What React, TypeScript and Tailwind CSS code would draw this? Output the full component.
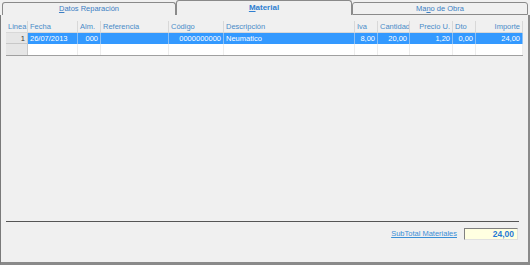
import React from "react";

const cols = [
  { h: "Linea", w: 22, ha: "left", v: "1", va: "right" },
  { h: "Fecha", w: 50, ha: "left", v: "26/07/2013", va: "left" },
  { h: "Alm.", w: 23, ha: "left", v: "000", va: "right" },
  { h: "Referencia", w: 68, ha: "left", v: "", va: "left" },
  { h: "Código", w: 55, ha: "left", v: "0000000000", va: "right" },
  { h: "Descripción", w: 131, ha: "left", v: "Neumatico", va: "left" },
  { h: "Iva", w: 23, ha: "left", v: "8,00", va: "right" },
  { h: "Cantidad", w: 32, ha: "left", v: "20,00", va: "right" },
  { h: "Precio U.", w: 43, ha: "right", v: "1,20", va: "right" },
  { h: "Dto", w: 23, ha: "left", v: "0,00", va: "right" },
  { h: "Importe", w: 47, ha: "right", v: "24,00", va: "right" },
];

export default function App() {
  return (
    <div
      className="w-[530px] h-[265px] bg-[#f0f0f0] flex flex-col text-[7.5px] leading-none overflow-hidden"
      style={{ fontFamily: '"Liberation Sans", Arial, sans-serif' }}
    >
      {/* tabs */}
      <div className="flex h-[15px] pl-[2px] pr-[2px] items-end shrink-0">
        <div className="w-[174px] h-[13px] border border-b-0 border-[#8a8a8a] rounded-t-[3px] bg-[#f0f0f0] flex items-center justify-center text-[#3c7fc4] border-b border-b-[#8a8a8a]">
          <span>
            <span className="underline">D</span>atos Reparación
          </span>
        </div>
        <div className="w-[176px] h-[15px] border border-b-0 border-[#8a8a8a] rounded-t-[3px] bg-[#f0f0f0] flex items-center justify-center text-[#2f7fd1] font-bold text-[8px]">
          <span>
            <span className="underline">M</span>aterial
          </span>
        </div>
        <div className="flex-1 h-[13px] border border-[#8a8a8a] rounded-t-[3px] bg-[#f0f0f0] flex items-center justify-center text-[#3c7fc4]">
          <span>
            Ma<span className="underline">n</span>o de Obra
          </span>
        </div>
      </div>

      {/* panel */}
      <div className="flex-1 flex flex-col border-l border-l-[#7a7a7a] border-r-2 border-r-[#8a8a8a] border-b-[3px] border-b-[#8a8a8a] bg-[#f0f0f0]">
        {/* grid */}
        <div className="mt-[6px] ml-[5px] w-[517px] border-b border-b-[#a0a0a0]">
          <div className="flex h-[12px] bg-[#f0f0f0]">
            {cols.map((c, i) => (
              <div
                key={i}
                style={{ width: c.w, textAlign: c.ha as "left" | "right" }}
                className="border-r border-r-[#d8d8d8] border-b border-b-[#d8d8d8] px-[2px] pt-[2px] text-[#4a8cc8] whitespace-nowrap overflow-hidden"
              >
                {c.h}
              </div>
            ))}
          </div>
          <div className="flex h-[11px]">
            {cols.map((c, i) => (
              <div
                key={i}
                style={{ width: c.w, textAlign: c.va as "left" | "right" }}
                className={
                  i === 0
                    ? "bg-[#e6e6e6] text-[#333] border-r border-r-[#c8c8c8] border-b border-b-[#c8c8c8] px-[2px] pt-[2px]"
                    : "bg-[#3399ff] text-white border-r border-r-[#8cc0f5] px-[2px] pt-[2px] whitespace-nowrap overflow-hidden"
                }
              >
                {c.v}
              </div>
            ))}
          </div>
          <div className="flex h-[11px]">
            {cols.map((c, i) => (
              <div
                key={i}
                style={{ width: c.w }}
                className={
                  i === 0
                    ? "bg-[#e6e6e6] border-r border-r-[#c8c8c8]"
                    : "bg-white border-r border-r-[#ececec]"
                }
              />
            ))}
          </div>
        </div>

        <div className="flex-1" />

        {/* divider */}
        <div className="ml-[5px] w-[513px] h-px bg-[#555555]" />

        {/* subtotal */}
        <div className="flex items-center justify-end mt-[6px] pr-[10px] mb-[22px]">
          <span className="text-[#3a8fd6] underline mr-[7px]">SubTotal Materiales</span>
          <div className="w-[54px] h-[12px] bg-[#ffffe1] border-t border-l border-t-[#808080] border-l-[#808080] border-b border-r border-b-[#e0e0e0] border-r-[#e0e0e0] flex items-center justify-end pr-[3px] text-[#1f7ad6] font-bold text-[8.5px]">
            24,00
          </div>
        </div>
      </div>
    </div>
  );
}
